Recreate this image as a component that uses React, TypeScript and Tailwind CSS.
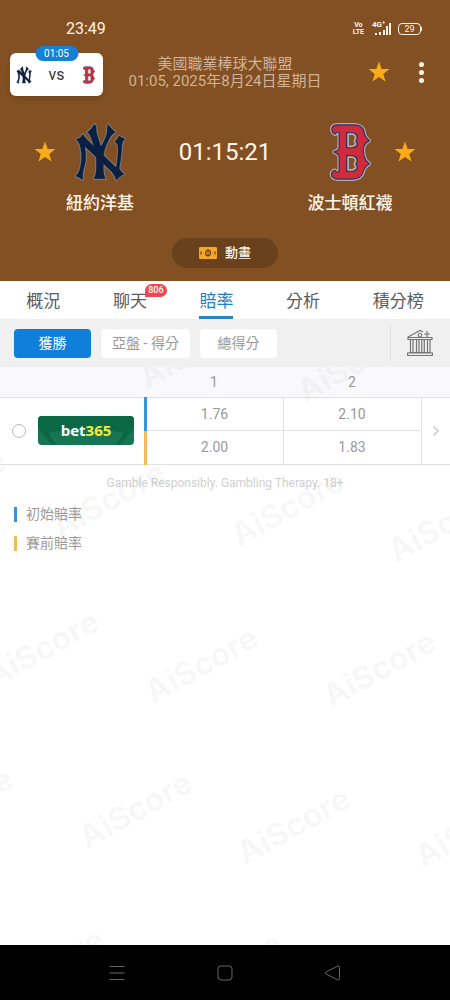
import React from 'react';
import { ChevronRight } from 'lucide-react';

const tabs = [
  { label: '概況' },
  { label: '聊天', badge: '806' },
  { label: '賠率', active: true },
  { label: '分析' },
  { label: '積分榜' },
];

// baseline start of every repeated brand mark, measured from the content's top left
const watermarks = [
  { x: 148, y: 24 },
  { x: 306, y: 38 },
  { x: -98, y: 162 },
  { x: 61, y: 174 },
  { x: 240, y: 182 },
  { x: 397, y: 198 },
  { x: -5, y: 323 },
  { x: 154, y: 339 },
  { x: 332, y: 343 },
  { x: -91, y: 480 },
  { x: 88, y: 484 },
  { x: 246, y: 500 },
  { x: 424, y: 503 },
  { x: 0, y: 641 },
  { x: 178, y: 645 },
];

const Star: React.FC = () => (
  <svg viewBox="0 0 22 22" className="h-[22px] w-[22px]" fill="#fbab18">
    <path d="M11 0.5l2.7 7.4 7.8.2-6.2 4.8 2.2 7.6L11 16l-6.500 4.500 2.200-7.600L.5 8.100l7.800-.2z" />
  </svg>
);

const NY_Y =
  'M260 66Q274 56 282 41Q288 48 287 58Q286 66 301 108Q319 76 319 64Q318 50 322 42Q332 56 344 66Q334 70 328 80Q311 110 308 135L308 175Q308 192 314 203L280 203Q287 190 287 175L287 135Q282 110 270 78Q266 68 260 66Z';
const NY_N =
  'M226 86Q240 84 247 71Q252 78 260 88L346 170Q353 135 351 105Q347 98 342 92Q351 86 354 76Q362 82 372 84Q364 92 363 105Q362 140 355 172Q361 186 371 189Q356 194 347 208Q344 196 332 182L253 108Q260 150 249 175Q245 190 247 207Q236 198 225 195Q235 188 239 172Q247 140 240 110Q236 92 226 86Z';

const YankeesLogo: React.FC<{ className: string }> = ({ className }) => (
  <svg viewBox="219 35 158 178" className={className} strokeLinejoin="round">
    <g fill="#858790" stroke="#858790" strokeWidth="6">
      <path d={NY_N} />
      <path d={NY_Y} />
    </g>
    <g fill="#0b1f40" stroke="#0b1f40" strokeWidth="1">
      <path d={NY_N} />
      <path d={NY_Y} />
    </g>
  </svg>
);

const B_OUTER =
  'M320 58Q320 46 336 46L384 46Q410 47 413 66Q414 82 428 91Q414 98 411 112Q410 122 412 134Q416 152 428 160Q414 168 410 184Q405 203 380 204L336 204Q320 203 319 192Q320 183 327 181Q330 189 342 184L342 140Q340 128 327 125Q340 122 342 112L342 66Q332 60 328 70Q321 66 320 58Z';
const B_HOLES =
  'M363 68L363 112L380 112Q396 110 394 99Q387 91 394 85Q395 69 380 68ZM363 136L363 182L380 182Q396 180 394 168Q387 160 394 154Q395 138 380 136Z';
const B_RINGS =
  'M367 72L367 108L379 108Q391 106 389 99Q382 91 389 85Q390 73 379 72ZM367 140L367 178L379 178Q391 176 389 168Q382 160 389 154Q390 142 379 140Z';

const RedSoxLogo: React.FC<{ className: string }> = ({ className }) => (
  <svg viewBox="310 36 128 178" className={className} fillRule="evenodd" strokeLinejoin="round">
    <path d={B_OUTER} fill="none" stroke="#b3aeb2" strokeWidth="14" />
    <path d={B_OUTER} fill="none" stroke="#343061" strokeWidth="7" />
    <path d={B_OUTER + B_HOLES} fill="#ce2c3c" />
    <path d={B_HOLES} fill="none" stroke="#343061" strokeWidth="4" />
    <path d={B_RINGS} fill="none" stroke="#b3aeb2" strokeWidth="5" />
  </svg>
);

const BankIcon: React.FC = () => (
  <svg viewBox="0 0 26 28" className="h-7 w-[26px]" fill="none" stroke="#767676" strokeWidth="1.2">
    <path d="M1 10L1 8L13 1.5L16 3M25 8V10.5H1V8.5H25M20 2v6M17 5h6" />
    <circle cx="13" cy="6.3" r="1.8" />
    <path d="M3.500 11v12M6 11v12M9.500 11v12M12 11v12M14.800 11v12M17.300 11v12M20.500 11v12M23 11v12" />
    <path d="M2 23.500h22M.6 26.500h24.800v-2.500H.6z" />
  </svg>
);

const StatusBar: React.FC = () => (
  <div className="flex h-[18px] items-center justify-between pr-7 pl-[66px]">
    <span className="text-base leading-[18px] text-[#fff3e2]">23:49</span>
    <div className="flex items-center text-[#fff3e2]">
      <div className="flex flex-col items-center text-[7px] leading-[7px] font-bold">
        <span>Vo</span>
        <span>LTE</span>
      </div>
      <div className="relative ml-2 h-3.5 w-5">
        <span className="absolute -top-px left-0 text-[8px] leading-[8px] font-bold">4G⁺</span>
        <svg viewBox="0 0 20 14" className="h-3.5 w-5" fill="currentColor">
          <path d="M3 11h2v2H3zM7 10h2v3H7zM11 8h2v5h-2zM14 4h2v9h-2zM17 1h2v12h-2z" />
        </svg>
      </div>
      <div className="ml-1.5 flex h-3 w-[23px] items-center justify-center rounded-[4px] border border-current text-[9px] leading-none">
        29
      </div>
      <div className="h-1 w-px bg-current" />
    </div>
  </div>
);

const MatchHeader: React.FC = () => (
  <header className="bg-[#825022] pt-5 pb-[13px]">
    <StatusBar />
    <div className="mt-[15px] flex items-start px-2.5">
      <div className="relative flex h-[43px] w-[93px] items-center justify-between rounded-md bg-white px-1.5 shadow-md">
        <span className="absolute -top-[7px] left-1/2 h-[15px] w-[43px] -translate-x-1/2 rounded-lg bg-[#1580d8] text-center text-[10px] leading-[15px] text-white">
          01:05
        </span>
        <YankeesLogo className="h-[18px] w-4" />
        <span className="text-base leading-none text-[#333]">vs</span>
        <RedSoxLogo className="h-[18px] w-4" />
      </div>
      <h1 className="flex-1 pt-[3px] text-center text-[15px] leading-[17px] text-[#d0b399]">
        美國職業棒球大聯盟
        <br />
        01:05, 2025年8月24日星期日
      </h1>
      <div className="flex w-[93px] items-center pt-2 pl-[21px]">
        <button aria-label="收藏">
          <Star />
        </button>
        <button aria-label="更多" className="ml-[29px] flex flex-col gap-[3px]">
          <span className="size-[5px] rounded-full bg-[#fff6ea]" />
          <span className="size-[5px] rounded-full bg-[#fff6ea]" />
          <span className="size-[5px] rounded-full bg-[#fff6ea]" />
        </button>
      </div>
    </div>

    <div className="mt-[26px] flex items-start px-[34px] text-[#fff6ea]">
      <button aria-label="收藏紐約洋基" className="flex h-[60px] items-center">
        <Star />
      </button>
      <div className="flex w-[88px] flex-col items-center">
        <YankeesLogo className="h-[60px] w-[54px]" />
        <h2 className="mt-2.5 text-[17px] leading-[22px] font-medium whitespace-nowrap">紐約洋基</h2>
      </div>
      <div className="flex-1 text-center text-2xl leading-[60px]">01:15:21</div>
      <div className="flex w-[88px] flex-col items-center">
        <RedSoxLogo className="h-[60px] w-[43px]" />
        <h2 className="mt-2.5 text-[17px] leading-[22px] font-medium whitespace-nowrap">波士頓紅襪</h2>
      </div>
      <button aria-label="收藏波士頓紅襪" className="flex h-[60px] items-center">
        <Star />
      </button>
    </div>

    <button className="mx-auto mt-6 flex h-[30px] w-[106px] items-center justify-center gap-2 rounded-full bg-[#69411c] text-[13px] font-medium text-[#fff6ea]">
      <svg viewBox="0 0 18 12" className="h-3 w-[18px]">
        <rect width="18" height="12" rx="1" fill="#f5a72b" />
        <path d="M9 2v8" stroke="#69411c" />
        <circle cx="9" cy="6" r="2.600" fill="none" stroke="#69411c" strokeWidth="1.200" />
        <path d="M2 4.500v3M16 4.500v3" stroke="#69411c" strokeWidth="1.200" />
      </svg>
      動畫
    </button>
  </header>
);

const TabBar: React.FC = () => (
  <nav className="flex h-[38px] justify-around bg-white">
    {tabs.map((tab) => (
      <a
        key={tab.label}
        href="#"
        className={
          tab.active
            ? 'relative border-b-3 border-[#2585c7] pt-px text-[17px] leading-[38px] text-[#1c80c8]'
            : 'relative pt-px text-[17px] leading-[38px] text-[#5c5c5c]'
        }
      >
        {tab.label}
        {tab.badge && (
          <span className="absolute top-[3px] left-8 h-[13px] w-[22px] rounded-full rounded-bl-none bg-[#f5464f] text-center text-[9px] leading-[13px] font-medium text-white">
            {tab.badge}
          </span>
        )}
      </a>
    ))}
  </nav>
);

const FilterBar: React.FC = () => (
  <div className="flex h-12 items-center gap-2.5 bg-[#f0f0f0] pr-[17px] pl-3.5 text-sm text-[#999]">
    <button className="h-[29px] w-[77px] rounded bg-[#107edb] text-white">獲勝</button>
    <button className="h-[29px] w-[89px] rounded bg-white">亞盤 - 得分</button>
    <button className="h-[29px] w-[77px] rounded bg-white">總得分</button>
    <div className="ml-auto h-9 w-px bg-[#e0e0e0]" />
    <button aria-label="博彩公司" className="ml-1.5">
      <BankIcon />
    </button>
  </div>
);

const OddsTable: React.FC = () => (
  <table className="w-full table-fixed border-collapse text-center text-sm text-[#999]">
    <colgroup>
      <col className="w-[145px]" />
      <col />
      <col />
      <col className="w-[29px]" />
    </colgroup>
    <thead>
      <tr className="h-[30px] border-b border-[#e2e2e6] bg-[#f8f8fd]">
        <td />
        <th scope="col" className="font-normal">1</th>
        <th scope="col" className="font-normal">2</th>
        <td />
      </tr>
    </thead>
    <tbody>
      <tr className="h-[33px]">
        <td rowSpan={2} className="border-b border-[#e2e2e6]">
          <div className="flex items-center gap-3 pl-3">
            <input
              type="radio"
              name="bookmaker"
              aria-label="bet365"
              className="size-3.5 appearance-none rounded-full border border-[#bbb] bg-white"
            />
            <a
              href="#"
              className="relative flex h-[29px] w-24 items-center justify-center overflow-hidden rounded bg-[#167653] font-['Open_Sans',sans-serif] text-[15px] leading-none font-bold text-white"
            >
              <svg viewBox="0 0 96 29" className="absolute inset-0" fill="#0a6845">
                <path d="M0 0H96V12L82 29H78L86 17Q48 9 10 17L18 29H14L0 12z" />
              </svg>
              <span className="relative">
                bet<span className="text-[#f7e93a]">365</span>
              </span>
            </a>
          </div>
        </td>
        <td className="border-r border-b border-l-3 border-[#e2e2e6] border-l-[#3a94dd]">1.76</td>
        <td className="border-r border-b border-[#e2e2e6]">2.10</td>
        <td rowSpan={2} className="border-b border-[#e2e2e6]">
          <button aria-label="詳情" className="flex w-full justify-center">
            <ChevronRight size={16} color="#c4c4c4" />
          </button>
        </td>
      </tr>
      <tr className="h-[34px]">
        <td className="border-r border-b border-l-3 border-[#e2e2e6] border-l-[#f3bb60]">2.00</td>
        <td className="border-r border-b border-[#e2e2e6]">1.83</td>
      </tr>
    </tbody>
  </table>
);

const SystemNav: React.FC = () => (
  <nav className="flex h-[55px] items-center justify-between bg-black px-[24%]">
    <button aria-label="最近">
      <svg viewBox="0 0 18 18" className="size-[18px]" stroke="#666">
        <path d="M1.500 2.500h15M1.500 9h15M1.500 15.500h15" />
      </svg>
    </button>
    <button aria-label="主畫面">
      <svg viewBox="0 0 18 18" className="size-[18px]" fill="none" stroke="#666">
        <rect x="2" y="2" width="14" height="14" rx="3" />
      </svg>
    </button>
    <button aria-label="返回">
      <svg viewBox="0 0 18 18" className="size-[18px]" fill="none" stroke="#666" strokeLinejoin="round">
        <path d="M2 8q-1 1 0 2l12 6q1.500 0 1.500-1.500v-11Q15.500 2 14 2z" />
      </svg>
    </button>
  </nav>
);

const App: React.FC = () => {
  return (
    <div className="flex min-h-screen flex-col bg-white font-[Roboto,'Noto_Sans_CJK_TC',sans-serif]">
      <MatchHeader />
      <TabBar />
      <FilterBar />
      <main className="relative flex-1 overflow-hidden">
        <OddsTable />
        <p className="mt-2.5 text-center text-xs leading-4 text-[#cfcfcf]">
          Gamble Responsibly. Gambling Therapy. 18+
        </p>
        <ul className="mt-[9px] px-3.5 text-sm leading-[29px] text-[#999]">
          <li className="flex items-center gap-[9px]">
            <span className="h-[15px] w-[3px] bg-[#3a94dd]" />
            初始賠率
          </li>
          <li className="flex items-center gap-[9px]">
            <span className="h-[15px] w-[3px] bg-[#f3bb60]" />
            賽前賠率
          </li>
        </ul>
        <div aria-hidden="true" className="pointer-events-none absolute inset-0">
          {watermarks.map((mark) => (
            <span
              key={`${mark.x}-${mark.y}`}
              className="absolute h-8 origin-bottom-left -translate-y-full -rotate-[29deg] text-[32px] leading-[38px] font-bold text-black/4 font-[Inter,sans-serif]"
              style={{ left: mark.x, top: mark.y }}
            >
              AiScore
            </span>
          ))}
        </div>
      </main>
      <SystemNav />
    </div>
  );
};

export default App;
